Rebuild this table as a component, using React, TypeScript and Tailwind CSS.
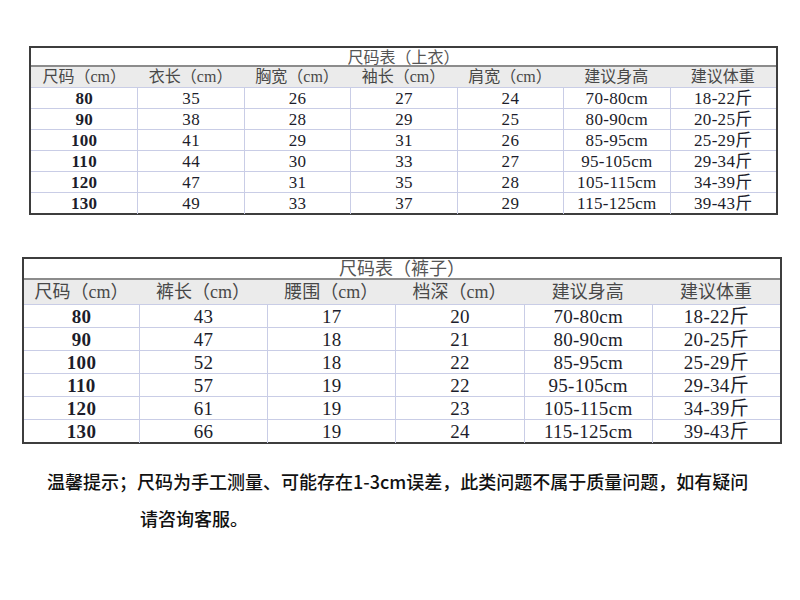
const serif = "font-['Liberation_Serif','Noto_Sans_CJK_SC',serif]"

const topRows = [
  ['80', '35', '26', '27', '24', '70-80cm', '18-22斤'],
  ['90', '38', '28', '29', '25', '80-90cm', '20-25斤'],
  ['100', '41', '29', '31', '26', '85-95cm', '25-29斤'],
  ['110', '44', '30', '33', '27', '95-105cm', '29-34斤'],
  ['120', '47', '31', '35', '28', '105-115cm', '34-39斤'],
  ['130', '49', '33', '37', '29', '115-125cm', '39-43斤'],
]

const pantsRows = [
  ['80', '43', '17', '20', '70-80cm', '18-22斤'],
  ['90', '47', '18', '21', '80-90cm', '20-25斤'],
  ['100', '52', '18', '22', '85-95cm', '25-29斤'],
  ['110', '57', '19', '22', '95-105cm', '29-34斤'],
  ['120', '61', '19', '23', '105-115cm', '34-39斤'],
  ['130', '66', '19', '24', '115-125cm', '39-43斤'],
]

const topHead = ['尺码（cm）', '衣长（cm）', '胸宽（cm）', '袖长（cm）', '肩宽（cm）', '建议身高', '建议体重']
const pantsHead = ['尺码（cm）', '裤长（cm）', '腰围（cm）', '档深（cm）', '建议身高', '建议体重']

export default function App() {
  return (
    <div className={`min-h-[600px] w-[800px] bg-white pt-[46px] ${serif}`}>
      {/* top table */}
      <div className="ml-[29px] w-[749px] border-2 border-[#3d3d3d]">
        <div className="h-[19px] border-b-2 border-[#8c8c8c] text-center text-[16px] leading-[19px] text-[#555]">
          尺码表（上衣）
        </div>
        <div className="grid h-[20px] grid-cols-7 bg-[#ebebeb] text-[16px] leading-[20px] text-[#484848]">
          {topHead.map((h) => (
            <div key={h} className="text-center whitespace-nowrap">{h}</div>
          ))}
        </div>
        {topRows.map((row, i) => (
          <div key={i} className="grid h-[21px] grid-cols-7 border-t border-[#c9cde6] text-[17px] leading-[21px] tracking-[0.3px] text-[#1c1d2b]">
            {row.map((c, j) => (
              <div key={j} className={`text-center ${j > 0 ? 'border-l border-[#c9cde6]' : 'font-bold'}`}>
                {c}
              </div>
            ))}
          </div>
        ))}
      </div>

      {/* pants table */}
      <div className="ml-[22px] mt-[42px] w-[760px] border-2 border-[#3d3d3d]">
        <div className="h-[21px] border-b-2 border-[#8c8c8c] text-center text-[18px] leading-[21px] text-[#555]">
          尺码表（裤子）
        </div>
        <div className="grid h-[24px] grid-cols-[115px_repeat(5,1fr)] bg-[#ebebeb] text-[18px] leading-[24px] text-[#484848]">
          {pantsHead.map((h) => (
            <div key={h} className="text-center whitespace-nowrap">{h}</div>
          ))}
        </div>
        {pantsRows.map((row, i) => (
          <div key={i} className="grid h-[23px] grid-cols-[115px_repeat(5,1fr)] border-t border-[#c9cde6] text-[19px] leading-[23px] tracking-[0.3px] text-[#1c1d2b]">
            {row.map((c, j) => (
              <div key={j} className={`text-center ${j > 0 ? 'border-l border-[#c9cde6]' : 'font-bold'}`}>
                {c}
              </div>
            ))}
          </div>
        ))}
      </div>

      <div className="mt-[19px] font-['Noto_Sans_CJK_SC',sans-serif] text-[18px] font-medium leading-[37px] text-[#111]">
        <p className="pl-[47px] whitespace-nowrap">温馨提示；尺码为手工测量、可能存在1-3cm误差，此类问题不属于质量问题，如有疑问</p>
        <p className="pl-[140px]">请咨询客服。</p>
      </div>
    </div>
  )
}
